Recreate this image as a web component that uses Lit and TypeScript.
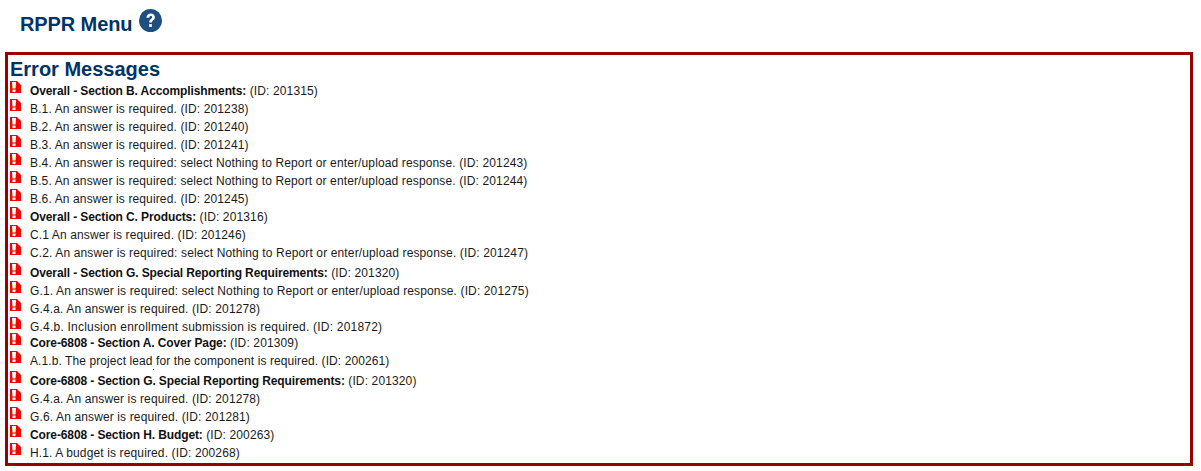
import { LitElement, html, css } from "lit";
import { customElement } from "lit/decorators.js";

type Row = { b?: string; t: string; gap?: "tall" | "tight"; fit?: "wide" | "narrow"; speck?: boolean };

const rows: Row[] = [
  { b: "Overall - Section B. Accomplishments:", t: " (ID: 201315)" },
  { t: "B.1. An answer is required. (ID: 201238)" },
  { t: "B.2. An answer is required. (ID: 201240)" },
  { t: "B.3. An answer is required. (ID: 201241)" },
  { t: "B.4. An answer is required: select Nothing to Report or enter/upload response. (ID: 201243)" },
  { t: "B.5. An answer is required: select Nothing to Report or enter/upload response. (ID: 201244)" },
  { t: "B.6. An answer is required. (ID: 201245)" },
  { b: "Overall - Section C. Products:", t: " (ID: 201316)" },
  { t: "C.1 An answer is required. (ID: 201246)" },
  { t: "C.2. An answer is required: select Nothing to Report or enter/upload response. (ID: 201247)" },
  { b: "Overall - Section G. Special Reporting Requirements:", t: " (ID: 201320)", gap: "tall" },
  { t: "G.1. An answer is required: select Nothing to Report or enter/upload response. (ID: 201275)" },
  { t: "G.4.a. An answer is required. (ID: 201278)" },
  { t: "G.4.b. Inclusion enrollment submission is required. (ID: 201872)", fit: "wide" },
  { b: "Core-6808 - Section A. Cover Page:", t: " (ID: 201309)", gap: "tight" },
  { t: "A.1.b. The project lead for the component is required. (ID: 200261)", fit: "narrow", speck: true },
  { b: "Core-6808 - Section G. Special Reporting Requirements:", t: " (ID: 201320)", gap: "tall" },
  { t: "G.4.a. An answer is required. (ID: 201278)" },
  { t: "G.6. An answer is required. (ID: 201281)" },
  { b: "Core-6808 - Section H. Budget:", t: " (ID: 200263)" },
  { t: "H.1. A budget is required. (ID: 200268)" },
];

@customElement("app-root")
export class AppRoot extends LitElement {
  static styles = css`
    :host {
      display: block;
      font-family: "Liberation Sans", Arial, sans-serif;
      color: #1a1a1a;
    }
    .head {
      display: flex;
      align-items: flex-start;
      gap: 7px;
      height: 52px;
      padding: 9px 0 0 20px;
      box-sizing: border-box;
    }
    h1 {
      margin: 4px 0 0;
      font-size: 20px;
      line-height: 23px;
      font-weight: bold;
      letter-spacing: -0.1px;
      color: #003366;
    }
    .help {
      display: block;
    }
    .box {
      margin: 0 8px 0 5px;
      height: 414px;
      box-sizing: border-box;
      border: 3px solid #990000;
      padding: 3px 0 0 2px;
    }
    h2 {
      margin: 0 0 1px;
      font-size: 20px;
      line-height: 23px;
      font-weight: bold;
      color: #003366;
    }
    .row {
      position: relative;
      display: flex;
      align-items: flex-start;
      height: 18px;
      font-size: 12px;
      line-height: 18px;
      letter-spacing: 0.13px;
    }
    .row.tall {
      margin-top: 2px;
    }
    .row.tight {
      margin-top: -2px;
    }
    .row.wide {
      letter-spacing: 0.21px;
    }
    .row.narrow {
      letter-spacing: 0.09px;
    }
    .icon {
      flex: none;
      margin: -1px 9px 0 0;
    }
    b {
      color: #111;
      letter-spacing: -0.11px;
    }
    .speck {
      position: absolute;
      left: 143px;
      top: 17px;
      width: 1px;
      height: 1px;
      background: #335;
    }
  `;

  render() {
    return html`
      <div class="head">
        <h1>RPPR Menu</h1>
        <svg class="help" width="23" height="23" viewBox="0 0 24 24">
          <circle cx="12" cy="12" r="12" fill="#1f4e80" />
          <path
            d="M7.800 9.200c0-2.700 1.900-4.400 4.500-4.400 2.500 0 4.300 1.500 4.300 3.800 0 1.700-.9 2.500-2 3.300-.9.700-1.200 1.100-1.200 2.200h-2.800c0-1.900.5-2.700 1.600-3.500 1-.7 1.500-1.200 1.500-1.900 0-.8-.6-1.300-1.400-1.300-1 0-1.500.6-1.600 1.800z"
            fill="#fff"
          />
          <rect x="10.600" y="15.700" width="2.800" height="3" fill="#fff" />
        </svg>
      </div>
      <div class="box">
        <h2>Error Messages</h2>
        ${rows.map(
          (r) => html`
            <div class="row ${r.gap ?? ""} ${r.fit ?? ""}">
              <svg class="icon" width="11" height="12" viewBox="0 0 11 12">
                <path d="M0 0H7L11 4V12H0Z" fill="#f00" />
                <path d="M2 1H6L5.500 7.500H2.500Z" fill="#fff" />
                <rect x="2.500" y="8.500" width="3" height="2.500" fill="#fff" />
              </svg>
              <span>${r.b ? html`<b>${r.b}</b>` : ""}${r.t}</span>
              ${r.speck ? html`<i class="speck"></i>` : ""}
            </div>
          `
        )}
      </div>
    `;
  }
}
